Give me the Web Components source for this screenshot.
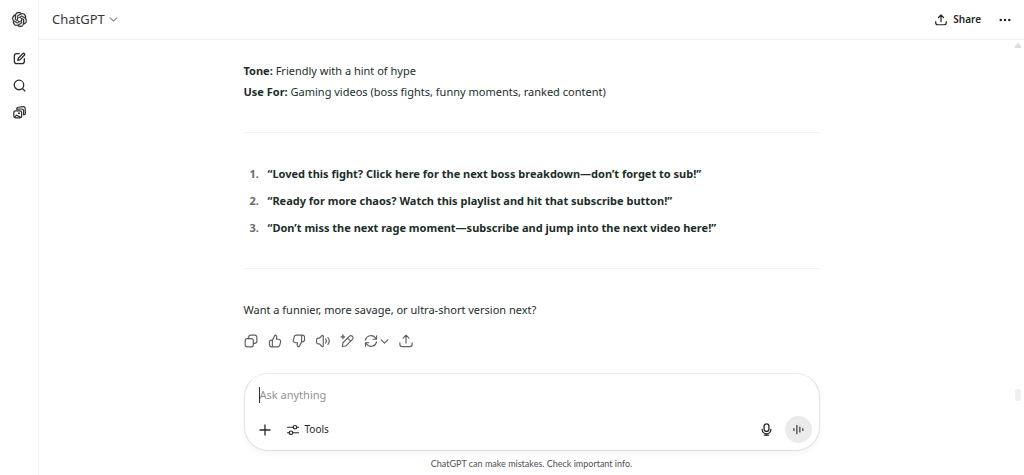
<!DOCTYPE html>
<html lang="en">
<head>
<meta charset="utf-8">
<meta name="viewport" content="width=device-width, initial-scale=1">
<title>ChatGPT</title>
<style>
  body { margin: 0; background: #fff; color: #1d2d2a; font: 11px/21px "Noto Sans", "Open Sans", sans-serif; }
</style>
</head>
<body>
<chat-app></chat-app>
<script>
const ICONS = {
  logo: '<path fill="currentColor" stroke="currentColor" stroke-width=".5" d="M22.2819 9.8211a5.9847 5.9847 0 0 0-.5157-4.9108 6.0462 6.0462 0 0 0-6.5098-2.9A6.0651 6.0651 0 0 0 4.9807 4.1818a5.9847 5.9847 0 0 0-3.9977 2.9 6.0462 6.0462 0 0 0 .7427 7.0966 5.98 5.98 0 0 0 .511 4.9107 6.051 6.051 0 0 0 6.5146 2.9001A5.9847 5.9847 0 0 0 13.2599 24a6.0557 6.0557 0 0 0 5.7718-4.2058 5.9894 5.9894 0 0 0 3.9977-2.9001 6.0557 6.0557 0 0 0-.7475-7.0729zm-9.022 12.6081a4.4755 4.4755 0 0 1-2.8764-1.0408l.1419-.0804 4.7783-2.7582a.7948.7948 0 0 0 .3927-.6813v-6.7369l2.02 1.1686a.071.071 0 0 1 .038.052v5.5826a4.504 4.504 0 0 1-4.4945 4.4944zm-9.6607-4.1254a4.4708 4.4708 0 0 1-.5346-3.0137l.142.0852 4.783 2.7582a.7712.7712 0 0 0 .7806 0l5.8428-3.3685v2.3324a.0804.0804 0 0 1-.0332.0615L9.74 19.9502a4.4992 4.4992 0 0 1-6.1408-1.6464zM2.3408 7.8956a4.485 4.485 0 0 1 2.3655-1.9728V11.6a.7664.7664 0 0 0 .3879.6765l5.8144 3.3543-2.0201 1.1685a.0757.0757 0 0 1-.071 0l-4.8303-2.7865A4.504 4.504 0 0 1 2.3408 7.872zm16.5963 3.8558L13.1038 8.364 15.1192 7.2a.0757.0757 0 0 1 .071 0l4.8303 2.7913a4.4944 4.4944 0 0 1-.6765 8.1042v-5.6772a.79.79 0 0 0-.407-.667zm2.0107-3.0231l-.142-.0852-4.7735-2.7818a.7759.7759 0 0 0-.7854 0L9.409 9.2297V6.8974a.0662.0662 0 0 1 .0284-.0615l4.8303-2.7866a4.4992 4.4992 0 0 1 6.6802 4.66zM8.3065 12.863l-2.02-1.1638a.0804.0804 0 0 1-.038-.0567V6.0742a4.4992 4.4992 0 0 1 7.3757-3.4537l-.142.0805L8.704 5.459a.7948.7948 0 0 0-.3927.6813zm1.0976-2.3654l2.602-1.4998 2.6069 1.4998v2.9994l-2.5974 1.4997-2.6067-1.4997Z"/>',
  compose: '<path d="M11.500 3H7a4.500 4.500 0 0 0-4.500 4.500V17A4.500 4.500 0 0 0 7 21.500h9.500A4.500 4.500 0 0 0 21 17v-4.500"/><path d="M9 15.500l.6-4L18 3.100a2.100 2.100 0 0 1 3 3l-8.400 8.500z"/>',
  search: '<circle cx="11" cy="11" r="8.800"/><path d="M17.400 17.400l4.600 4.600"/>',
  library: '<rect x="1.500" y="9" width="14.500" height="13" rx="3.500"/><path d="M6.500 5.500a3.500 3.500 0 0 1 3-3.200L19 1.300a3 3 0 0 1 3.300 2.600l.7 9a3.500 3.500 0 0 1-3.200 3.500M6.500 5.600L16 5.500a3.500 3.500 0 0 1 3.600 3.400l.1 7.600M3 20.500l3.500-3.500 8 4"/><circle cx="11" cy="13.500" r=".8"/>',
  chevron: '<path d="M3 7.500l9 9 9-9"/>',
  share: '<path d="M12 15.500V2.500M7 7l5-5 5 5M1.500 15v2.500A4 4 0 0 0 5.500 21.500h13a4 4 0 0 0 4-4V15"/>',
  more: '<g fill="currentColor" stroke="none"><circle cx="3.500" cy="12" r="2.500"/><circle cx="12" cy="12" r="2.500"/><circle cx="20.500" cy="12" r="2.500"/></g>',
  copy: '<rect x="2" y="8" width="14" height="14" rx="3.500"/><path d="M8 8V5.500A3.500 3.500 0 0 1 11.500 2h7A3.500 3.500 0 0 1 22 5.500v7a3.500 3.500 0 0 1-3.500 3.500H16"/>',
  up: '<path d="M7.500 10.500L12 2c2.200 0 3.500 1.700 3.100 3.700L14.300 9H18c2.600 0 4.300 2.100 3.700 4.500l-1.400 5.300A4 4 0 0 1 16.400 22H6a3.500 3.500 0 0 1-3.500-3.500V14A3.500 3.500 0 0 1 6 10.500zM7.500 10.500V22"/>',
  down: '<path d="M16.500 13.500L12 22c-2.200 0-3.500-1.700-3.100-3.700l.8-3.300H6c-2.600 0-4.300-2.100-3.700-4.500l1.400-5.300A4 4 0 0 1 7.600 2H18a3.500 3.500 0 0 1 3.500 3.500V10a3.500 3.500 0 0 1-3.500 3.500zM16.500 13.500V2"/>',
  speaker: '<path d="M12.500 4v16c0 1.500-1.500 2-2.600 1L6 17H4a3 3 0 0 1-3-3v-4a3 3 0 0 1 3-3h2l3.900-4c1.100-1 2.600-.5 2.600 1zM16.500 8.500q2.500 3.500 0 7M20.500 6q4.500 6 0 12"/>',
  edit: '<path d="M4 21.500l1-6.500L16 4a3.700 3.700 0 0 1 5.300 5.300L10.200 20.500zM13 7l5.200 5.200"/><path fill="currentColor" stroke-width="1" d="M5 1l1 3 3 1-3 1-1 3-1-3-3-1 3-1z"/>',
  retry: '<path d="M2.500 10.500A9.600 9.600 0 0 1 19.500 6.500L21.500 9M21.500 3v6h-6M21.500 13.500A9.600 9.600 0 0 1 4.500 17.500L2.500 15M2.500 21v-6h6"/>',
  plus: '<path d="M12 2v20M2 12h20"/>',
  tools: '<path d="M1 6.500h11.500M19.500 6.500h3.500M1 17.500h3.500M11.500 17.500h11.500"/><circle cx="16" cy="6.500" r="3.500"/><circle cx="8" cy="17.500" r="3.500"/>',
  mic: '<rect x="7.500" y="1.500" width="9" height="14" rx="4.500"/><path d="M4 12a8 8 0 0 0 16 0M12 20v3M8 22.500h8"/>',
  voice: '<path d="M2 10v4M8.500 3v18M15 6.500v11M21.500 10v4"/>'
};

const define = (name, html) => customElements.define(name, class extends HTMLElement {
  constructor() {
    super();
    const t = document.createElement('template');
    t.innerHTML = html;
    this.attachShadow({ mode: 'open' }).append(t.content.cloneNode(true));
  }
});

customElements.define('ui-icon', class extends HTMLElement {
  connectedCallback() {
    if (this.shadowRoot) return;
    this.attachShadow({ mode: 'open' }).innerHTML = `
      <style>
        :host { display: block; width: var(--icon-size, 14px); height: var(--icon-size, 14px); flex: none; }
        svg { display: block; width: 100%; height: 100%; overflow: visible; }
      </style>
      <svg viewBox="0 0 24 24" fill="none" stroke="currentColor" stroke-width="${this.getAttribute('weight') || 2}"
        stroke-linecap="round" stroke-linejoin="round" aria-hidden="true">${ICONS[this.getAttribute('name')]}</svg>`;
  }
});

const BUTTON = `button { display: flex; align-items: center; justify-content: center; margin: 0; padding: 0; border: 0; background: none; color: inherit; font: inherit; }`;

define('side-rail', `
  <style>
    :host { display: block; border-right: 1px solid #f4f4f4; color: #2c2c2c; }
    nav { display: flex; flex-direction: column; align-items: center; --icon-size: 13px; }
    a { display: flex; align-items: center; justify-content: center; width: 100%; height: 39px; color: inherit; --icon-size: 15px; }
    ${BUTTON}
    button { width: 100%; height: 27px; }
    a + button { margin-top: 6px; }
  </style>
  <nav aria-label="Main">
    <a href="#" aria-label="Home"><ui-icon name="logo"></ui-icon></a>
    <button aria-label="New chat"><ui-icon name="compose" weight="2.4"></ui-icon></button>
    <button aria-label="Search"><ui-icon name="search" weight="2.4"></ui-icon></button>
    <button aria-label="Library"><ui-icon name="library" weight="2.2"></ui-icon></button>
  </nav>`);

define('top-bar', `
  <style>
    :host { display: block; border-bottom: 1px solid #f0f0f0; }
    header { display: flex; align-items: center; justify-content: space-between; height: 39px; padding: 0 13px; }
    ${BUTTON}
    .model { gap: 4px; font-size: 13px; color: #383838; }
    .model ui-icon { --icon-size: 9px; color: #8c8c8c; }
    .actions { display: flex; gap: 18px; color: #262626; font-size: 10px; font-weight: 600; --icon-size: 12px; }
    .share { gap: 6px; }
  </style>
  <header>
    <button class="model">ChatGPT <ui-icon name="chevron" weight="3"></ui-icon></button>
    <div class="actions">
      <button class="share"><ui-icon name="share" weight="2.4"></ui-icon>Share</button>
      <button aria-label="More"><ui-icon name="more"></ui-icon></button>
    </div>
  </header>`);

define('chat-message', `
  <style>
    :host { display: block; padding-top: 20px; }
    ::slotted(p) { margin: 0; }
    ::slotted(hr) { margin: 30px 0; border: 0; border-top: 1px solid #f2f2f2; }
  </style>
  <slot></slot>`);

define('prompt-list', `
  <style>
    :host { display: block; }
    ol { display: grid; gap: 6px; margin: 0; padding-left: 24px; font-weight: 700; }
    li::marker { content: counter(list-item) ".\\00a0\\00a0\\00a0"; color: #6a6a6a; }
  </style>
  <ol>
    <li>“Loved this fight? Click here for the next boss breakdown—don’t forget to sub!”</li>
    <li>“Ready for more chaos? Watch this playlist and hit that subscribe button!”</li>
    <li>“Don’t miss the next rage moment—subscribe and jump into the next video here!”</li>
  </ol>`);

define('message-actions', `
  <style>
    :host { display: block; color: #606060; }
    div { display: flex; gap: 10px; padding-top: 10px; }
    ${BUTTON}
    button { height: 22px; }
    .retry { gap: 2px; }
    .retry ui-icon + ui-icon { --icon-size: 9px; }
  </style>
  <div>
    <button aria-label="Copy"><ui-icon name="copy"></ui-icon></button>
    <button aria-label="Good response"><ui-icon name="up"></ui-icon></button>
    <button aria-label="Bad response"><ui-icon name="down"></ui-icon></button>
    <button aria-label="Read aloud"><ui-icon name="speaker"></ui-icon></button>
    <button aria-label="Edit in canvas"><ui-icon name="edit"></ui-icon></button>
    <button class="retry" aria-label="Try again"><ui-icon name="retry"></ui-icon><ui-icon name="chevron" weight="3"></ui-icon></button>
    <button aria-label="Share"><ui-icon name="share"></ui-icon></button>
  </div>`);

define('chat-composer', `
  <style>
    :host { display: block; }
    form { box-sizing: border-box; padding: 13px 7px 7px 14px; border: 1px solid #e2e2e2; border-top-color: #ececec; border-radius: 24px; background: #fff; box-shadow: 0 3px 6px rgba(0,0,0,.04); }
    input { display: block; box-sizing: border-box; width: 100%; height: 16px; margin: 0; padding: 0; border: 0; border-left: 1px solid #333; outline: 0; background: none; color: inherit; font: inherit; line-height: 16px; }
    input::placeholder { color: #929292; opacity: 1; }
    .row { display: flex; align-items: center; justify-content: space-between; margin-top: 13px; }
    .group { display: flex; align-items: center; gap: 16px; --icon-size: 12px; color: #282828; }
    ${BUTTON}
    .tools { gap: 6px; font-size: 10px; }
    .end { gap: 12px; --icon-size: 13px; }
    .voice { width: 27px; height: 27px; border-radius: 50%; background: #ebebeb; --icon-size: 11px; }
  </style>
  <form>
    <input type="text" aria-label="Message" placeholder="Ask anything">
    <div class="row">
      <div class="group">
        <button type="button" aria-label="Add"><ui-icon name="plus" weight="2.6"></ui-icon></button>
        <button type="button" class="tools"><ui-icon name="tools" weight="2.4"></ui-icon>Tools</button>
      </div>
      <div class="group end">
        <button type="button" aria-label="Dictate"><ui-icon name="mic" weight="2.4"></ui-icon></button>
        <button type="button" class="voice" aria-label="Voice mode"><ui-icon name="voice" weight="2.4"></ui-icon></button>
      </div>
    </div>
  </form>`);

define('scroll-track', `
  <style>
    :host { position: absolute; inset: 3px 3px 0 auto; width: 6px; }
    .arrow { width: 6px; height: 5px; background: #dcdcdc; clip-path: polygon(50% 0, 100% 60%, 100% 100%, 0 100%, 0 60%); }
    .thumb { position: absolute; top: 80%; width: 6px; height: 12px; border-radius: 2px; background: #efefef; }
  </style>
  <div class="arrow"></div><div class="thumb"></div>`);

define('chat-app', `
  <style>
    :host { display: grid; grid-template-columns: 39px minmax(0, 1fr); min-height: 100vh; }
    .page { display: flex; flex-direction: column; min-width: 0; }
    main { position: relative; flex: 1; display: flex; flex-direction: column; align-items: center; }
    .column { box-sizing: border-box; width: 100%; max-width: 576px; }
    b { font-weight: 700; }
    chat-composer { margin-top: 21px; }
    footer { margin-top: auto; font: 9px/23px Lato, sans-serif; text-align: center; color: #505050; }
  </style>
  <side-rail></side-rail>
  <div class="page">
    <top-bar></top-bar>
    <main>
      <div class="column">
        <chat-message>
          <p><b>Tone:</b> Friendly with a hint of hype</p>
          <p><b>Use For:</b> Gaming videos (boss fights, funny moments, ranked content)</p>
          <hr>
          <prompt-list></prompt-list>
          <hr>
          <p>Want a funnier, more savage, or ultra-short version next?</p>
        </chat-message>
        <message-actions></message-actions>
        <chat-composer></chat-composer>
      </div>
      <footer>ChatGPT can make mistakes. Check important info.</footer>
      <scroll-track></scroll-track>
    </main>
  </div>`);
</script>
</body>
</html>
